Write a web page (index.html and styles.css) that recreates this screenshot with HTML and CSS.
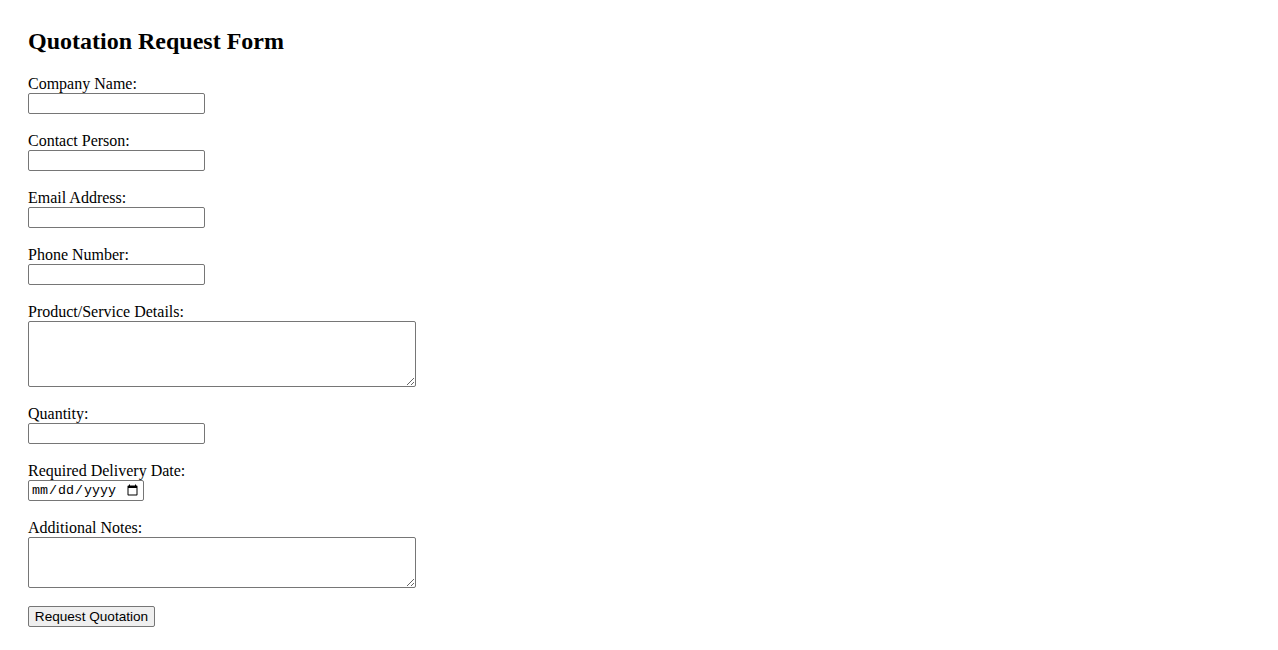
FILE: index.html
```html
<!DOCTYPE html>
<html lang="en">
<head>
<meta charset="utf-8">
<title>Quotation Request Form</title>
<link rel="stylesheet" href="styles.css">
</head>
<body>
<div class="page">
  <h2 class="title">Quotation Request Form</h2>
  <form class="form">
    <div class="field">
      <label class="label" for="company">Company Name:</label>
      <input class="text" type="text" id="company">
    </div>
    <div class="field">
      <label class="label" for="contact">Contact Person:</label>
      <input class="text" type="text" id="contact">
    </div>
    <div class="field">
      <label class="label" for="email">Email Address:</label>
      <input class="text" type="email" id="email">
    </div>
    <div class="field">
      <label class="label" for="phone">Phone Number:</label>
      <input class="text" type="tel" id="phone">
    </div>
    <div class="field">
      <label class="label" for="details">Product/Service Details:</label>
      <textarea class="area area-4" id="details"></textarea>
    </div>
    <div class="field">
      <label class="label" for="qty">Quantity:</label>
      <input class="text" type="number" id="qty">
    </div>
    <div class="field">
      <label class="label" for="date">Required Delivery Date:</label>
      <input class="date" type="date" id="date">
    </div>
    <div class="field">
      <label class="label" for="notes">Additional Notes:</label>
      <textarea class="area area-3" id="notes"></textarea>
    </div>
    <div class="field">
      <button class="btn" type="submit">Request Quotation</button>
    </div>
  </form>
</div>
</body>
</html>
```

FILE: styles.css
```css
html, body {
  background: #ffffff;
}
body {
  margin: 8px;
  font-family: "Liberation Serif", "Times New Roman", serif;
  font-size: 16px;
  color: #000;
}
.page {
  padding: 20px;
}
.title {
  margin: 0 0 20px 0;
  font-size: 24px;
  font-weight: bold;
  line-height: 27px;
}
.form {
  display: flex;
  flex-direction: column;
  align-items: flex-start;
  gap: 18px;
}
.field {
  display: flex;
  flex-direction: column;
  align-items: flex-start;
}
.label {
  display: block;
  line-height: 18px;
}
.text {
  box-sizing: border-box;
  width: 177px;
  height: 21px;
  margin: 0;
  padding: 1px 2px;
  border: 1px solid #767676;
  border-radius: 2px;
  font-family: "Liberation Sans", Arial, sans-serif;
  font-size: 13.33px;
  background: #fff;
}
.text::-webkit-outer-spin-button,
.text::-webkit-inner-spin-button {
  -webkit-appearance: none;
  margin: 0;
}
.date {
  box-sizing: border-box;
  width: 116px;
  height: 21px;
  margin: 0;
  padding: 1px 2px;
  border: 1px solid #767676;
  border-radius: 2px;
  font-family: "Liberation Mono", "Courier New", monospace;
  font-size: 13.33px;
  background: #fff;
  color: #000;
}
.area {
  box-sizing: border-box;
  width: 388px;
  margin: 0;
  padding: 2px;
  border: 1px solid #767676;
  border-radius: 2px;
  font-family: "Liberation Mono", "Courier New", monospace;
  font-size: 13.33px;
  background: #fff;
}
.area-4 {
  height: 66px;
}
.area-3 {
  height: 51px;
}
.btn {
  box-sizing: border-box;
  width: 127px;
  height: 21px;
  margin: 0;
  padding: 1px 4px;
  border: 1px solid #767676;
  border-radius: 2px;
  background: #efefef;
  font-family: "Liberation Sans", Arial, sans-serif;
  font-size: 13.6px;
  color: #000;
  text-align: center;
}
```
